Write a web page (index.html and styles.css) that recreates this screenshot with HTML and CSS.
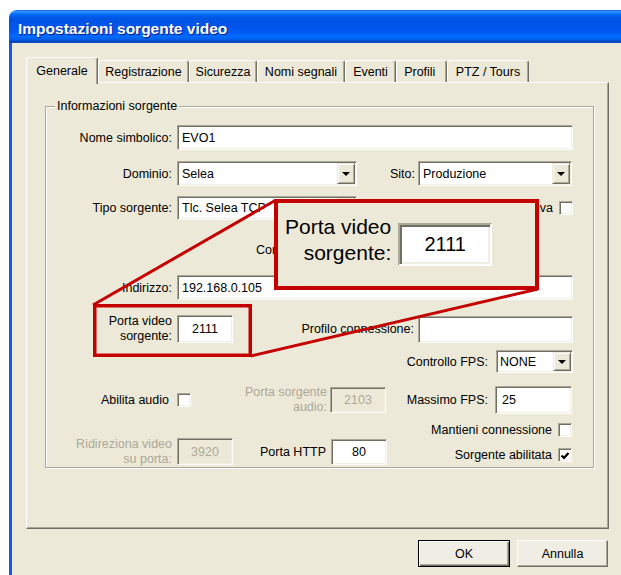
FILE: index.html
```html
<!DOCTYPE html>
<html lang="it">
<head>
<meta charset="utf-8">
<title>Impostazioni sorgente video</title>
<link rel="stylesheet" href="styles.css">
</head>
<body>
<div class="page">
  <div class="window">
    <div class="titlebar">Impostazioni sorgente video</div>
    <div class="client">
      <div class="tabs">
        <div class="tab tab-sel">Generale</div>
        <div class="tab">Registrazione</div>
        <div class="tab">Sicurezza</div>
        <div class="tab">Nomi segnali</div>
        <div class="tab">Eventi</div>
        <div class="tab">Profili&nbsp;</div>
        <div class="tab">PTZ / Tours</div>
      </div>
      <div class="panel">
        <div class="group">
          <div class="legend">Informazioni sorgente</div>

          <div class="row r1">
            <span class="lbl">Nome simbolico:</span>
            <div class="edit w396">EVO1</div>
          </div>

          <div class="row r2">
            <span class="lbl">Dominio:</span>
            <div class="edit combo w180">Selea<span class="drop"><i class="arrow"></i></span></div>
            <span class="lbl-sito">Sito:</span>
            <div class="edit combo w154">Produzione<span class="drop"><i class="arrow"></i></span></div>
          </div>

          <div class="row r3">
            <span class="lbl">Tipo sorgente:</span>
            <div class="edit combo w180">Tlc. Selea TCP<span class="drop"><i class="arrow"></i></span></div>
            <span class="lbl-fill">Attiva</span>
            <span class="chk"></span>
          </div>

          <div class="row r4">
            <span class="lbl-conn">Connessione:</span>
            <div class="edit combo w160"><span class="drop"><i class="arrow"></i></span></div>
          </div>

          <div class="row r5">
            <span class="lbl">Indirizzo:</span>
            <div class="edit w396">192.168.0.105</div>
          </div>

          <div class="row r6">
            <span class="lbl two">Porta video<br>sorgente:</span>
            <div class="edit w56 center h28">2111</div>
            <span class="lbl-prof">Profilo connessione:</span>
            <div class="edit w155 h27"></div>
          </div>

          <div class="row r7">
            <span class="lbl-fps">Controllo FPS:</span>
            <div class="edit combo w77 tight">NONE<span class="drop"><i class="arrow"></i></span></div>
          </div>

          <div class="row r8">
            <span class="lbl lbl-audio">Abilita audio</span>
            <span class="chk"></span>
            <span class="lbl-audport two dis-text">Porta sorgente<br>audio:</span>
            <div class="edit dis w56 center h26">2103</div>
            <span class="lbl-max">Massimo FPS:</span>
            <div class="edit w77 pad6">25</div>
          </div>

          <div class="row-last">
            <div class="last-left">
              <span class="lbl two dis-text">Ridireziona video<br>su porta:</span>
              <div class="edit dis w56 center h27">3920</div>
              <span class="lbl-http">Porta HTTP</span>
              <div class="edit w56 center h26">80</div>
            </div>
            <div class="last-right">
              <div class="chk-row">Mantieni connessione <span class="chk"></span></div>
              <div class="chk-row">Sorgente abilitata <span class="chk"><svg class="tick" viewBox="0 0 12 12" width="12" height="12"><polyline points="2.5,5.5 5,8 9.5,3" fill="none" stroke="#000" stroke-width="2.2"/></svg></span></div>
            </div>
          </div>
        </div>
      </div>
      <div class="buttons">
        <div class="btn btn-def">OK</div>
        <div class="btn">Annulla</div>
      </div>
    </div>
  </div>

  <div class="zoom-box">
    <span class="zoom-lbl">Porta video<br>sorgente:</span>
    <div class="zoom-edit">2111</div>
  </div>
  <svg class="zoom-lines" width="621" height="575" viewBox="0 0 621 575">
    <rect x="94.75" y="305.75" width="155.5" height="49.5" fill="none" stroke="#C40000" stroke-width="3.5"/>
    <line x1="93" y1="305" x2="276" y2="200" stroke="#C40000" stroke-width="3"/>
    <line x1="251" y1="356" x2="538" y2="289" stroke="#C40000" stroke-width="3"/>
  </svg>
</div>
</body>
</html>
```
FILE: styles.css
```css
* { box-sizing: border-box; }

html, body {
  margin: 0;
  padding: 0;
}

body {
  background: #fff;
  width: 621px;
  height: 575px;
  overflow: hidden;
  font-family: "Liberation Sans", Arial, sans-serif;
  font-size: 12.5px;
  color: #000;
}

.page {
  position: relative;
  width: 621px;
  height: 575px;
  overflow: hidden;
  padding: 10px 0 0 9px;
}

.window { width: 640px; }

/* Luna-style caption */
.titlebar {
  height: 33px;
  border-radius: 8px 0 0 0;
  padding: 4px 0 0 9px;
  line-height: 29px;
  color: #fff;
  font-weight: bold;
  font-size: 15.5px;
  text-shadow: 1px 1px 0 #0A1E8C;
  background: linear-gradient(to bottom,
    #0058EE 0%, #3593FF 4%, #288EFF 7%, #127DFF 10%, #036FFC 13%,
    #0262EE 17%, #0057E5 23%, #0054E3 30%, #0055EB 56%, #005BF5 68%,
    #026AFE 80%, #0062EF 88%, #0052D6 93%, #0040AB 97%, #1A5BD8 100%);
}

.client {
  border-left: 3px solid #1656E8;
  background: #ECE9D8;
  height: 540px;
  padding: 14px 0 0 14px;
}

/* tab strip */
.tabs {
  display: flex;
  align-items: flex-end;
  height: 25px;
  position: relative;
  z-index: 1;
}

.tab {
  flex: none;
  height: 22px;
  padding-top: 1px;
  line-height: 20px;
  text-align: center;
  white-space: nowrap;
  background: #ECE9D8;
  border: 1px solid;
  border-bottom: none;
  border-color: #fff #716F64 transparent #fff;
  border-radius: 3px 3px 0 0;
  box-shadow: inset -1px 0 0 #ACA899;
}

.tab-sel {
  height: 27px;
  margin-bottom: -2px;
  padding-top: 3px;
}

.tab:nth-child(1) { width: 72px; }
.tab:nth-child(2) { width: 91px; }
.tab:nth-child(3) { width: 68px; }
.tab:nth-child(4) { width: 88px; }
.tab:nth-child(5) { width: 51px; }
.tab:nth-child(6) { width: 51px; }
.tab:nth-child(7) { width: 82px; }

.panel {
  width: 583px;
  height: 447px;
  border: 1px solid;
  border-color: #fff #716F64 #716F64 #fff;
  box-shadow: inset -1px -1px 0 #ACA899;
  padding: 23px 0 0 18px;
}

/* etched group box */
.group {
  width: 549px;
  height: 362px;
  border: 1px solid #ACA899;
  box-shadow: 1px 1px 0 #fff, inset 1px 1px 0 #fff;
  display: flex;
  flex-direction: column;
  padding: 0 20px 0 0;
}

.legend {
  align-self: flex-start;
  height: 15px;
  line-height: 15px;
  margin: -8px 0 -7px 9px;
  padding: 0 2px;
  background: #ECE9D8;
}

.row {
  display: flex;
  align-items: center;
  flex: none;
}

.row > * { flex: none; }

.r1 { height: 25px; margin-top: 18px; }
.r2 { height: 25px; margin-top: 11px; }
.r3 { height: 24px; margin-top: 10px; }
.r4 { height: 25px; margin-top: 17px; }
.r5 { height: 25px; margin-top: 13px; }
.r6 { height: 28px; margin-top: 15px; }
.r7 { height: 23px; margin-top: 7px; justify-content: flex-end; }
.r8 { height: 28px; margin-top: 13px; }

.lbl {
  width: 126px;
  margin-right: 5px;
  text-align: right;
  white-space: nowrap;
}

.two { line-height: 15px; }

.lbl-sito { width: 58px; margin-right: 3px; text-align: right; }
.lbl-fill { flex: 1 1 auto !important; text-align: right; margin-right: 6px; }
.lbl-conn { margin-left: 210px; margin-right: 6px; }
.lbl-prof { width: 181px; margin-right: 4px; text-align: right; }
.lbl-fps { margin-right: 8px; }
.lbl-audio { padding-right: 3px; }
.lbl-audport { width: 136px; margin-right: 3px; text-align: right; }
.lbl-max { width: 102px; margin-right: 7px; text-align: right; }
.lbl-http { width: 93px; margin-right: 5px; text-align: right; }

.dis-text { color: #ACA899; }

/* sunken edit field */
.edit {
  height: 100%;
  display: flex;
  align-items: center;
  padding-left: 4px;
  white-space: nowrap;
  overflow: hidden;
  background: #fff;
  border: 1px solid;
  border-color: #ACA899 #fff #fff #ACA899;
  box-shadow: inset 1px 1px 0 #716F64, inset -1px -1px 0 #F1EFE2;
}

.edit.dis { background: #ECE9D8; color: #ACA899; }
.edit.center { justify-content: center; padding-left: 0; }
.edit.pad6 { padding-left: 6px; }
.edit.tight { padding-left: 3px; }

.w396 { width: 396px; }
.w180 { width: 180px; }
.w160 { width: 160px; }
.w155 { width: 155px; }
.w154 { width: 154px; }
.w77 { width: 77px; }
.w56 { width: 56px; }
.h28 { height: 28px; }
.h27 { height: 27px; }
.h26 { height: 26px; }

/* drop-down button */
.drop {
  margin: 1px 1px 1px auto;
  width: 18px;
  align-self: stretch;
  background: #ECE9D8;
  border: 1px solid;
  border-color: #ECE9D8 #716F64 #716F64 #ECE9D8;
  box-shadow: inset 1px 1px 0 #fff, inset -1px -1px 0 #ACA899;
  display: flex;
  align-items: center;
  justify-content: center;
  flex: none;
}

.arrow {
  width: 0;
  height: 0;
  border-left: 4px solid transparent;
  border-right: 4px solid transparent;
  border-top: 4px solid #000;
  margin-top: 1px;
}

.chk {
  width: 14px;
  height: 14px;
  flex: none;
  display: inline-flex;
  align-items: center;
  justify-content: center;
  background: #fff;
  border: 1px solid;
  border-color: #ACA899 #fff #fff #ACA899;
  box-shadow: inset 1px 1px 0 #716F64, inset -1px -1px 0 #F1EFE2;
}

.tick { display: block; margin: 1px 0 0 0; }

.row-last {
  display: flex;
  height: 43px;
  margin-top: 8px;
  flex: none;
}

.last-left {
  display: flex;
  align-items: center;
  height: 27px;
  margin-top: 16px;
}

.last-left > * { flex: none; }

.last-right {
  margin-left: auto;
  display: flex;
  flex-direction: column;
  gap: 9px;
}

.chk-row {
  height: 16px;
  display: flex;
  align-items: center;
  justify-content: flex-end;
  gap: 6px;
  margin-right: 1px;
  white-space: nowrap;
}

/* dialog buttons */
.buttons {
  width: 583px;
  margin-top: 11px;
  display: flex;
  justify-content: flex-end;
  gap: 7px;
  padding-right: 1px;
}

.btn {
  height: 27px;
  width: 91px;
  display: flex;
  align-items: center;
  justify-content: center;
  background: #EFEDE4;
  border: 1px solid;
  border-color: #fff #716F64 #716F64 #fff;
  box-shadow: inset -1px -1px 0 #ACA899;
}

.btn-def {
  width: 92px;
  border-color: #000;
  box-shadow: inset 1px 1px 0 #fff, inset -1px -1px 0 #716F64, inset -2px -2px 0 #ACA899;
}

/* magnified call-out */
.zoom-box {
  position: absolute;
  left: 274px;
  top: 199px;
  width: 265px;
  height: 91px;
  border: 4px solid #C40000;
  background: #ECE9D8;
  display: flex;
  align-items: center;
  padding-left: 7px;
  z-index: 2;
}

.zoom-lbl {
  font-size: 21px;
  line-height: 26px;
  text-align: right;
  margin-right: 7px;
  margin-bottom: 9px;
  white-space: nowrap;
}

.zoom-edit {
  width: 94px;
  height: 43px;
  display: flex;
  align-items: center;
  justify-content: center;
  font-size: 20px;
  background: #fff;
  border: 2px solid;
  border-color: #ACA899 #fff #fff #ACA899;
  box-shadow: inset 2px 2px 0 #716F64, inset -2px -2px 0 #F1EFE2;
}

.zoom-lines {
  position: absolute;
  left: 0;
  top: 0;
  z-index: 3;
  pointer-events: none;
}
```
